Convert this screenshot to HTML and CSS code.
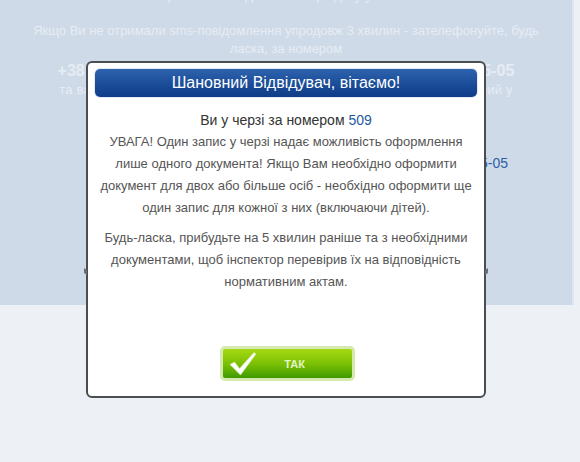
FILE: index.html
```html
<!DOCTYPE html>
<html lang="uk">
<head>
<meta charset="utf-8">
<link rel="stylesheet" href="styles.css">
</head>
<body>
<div class="page">
  <div class="panel">
    <p class="cut">ви отримаєте повідомлення про дату у хвилинах.</p>
    <p class="info">Якщо Ви не отримали sms-повідомлення упродовж 3 хвилин - зателефонуйте, будь<br>ласка, за номером</p>
    <p class="phone">+38 (044) 000-00-00, +38 (050) 000-00-00, +38 (067) 000-05-05</p>
    <p class="note">та ваш запис буде підтверджено в установленому порядку, визначений у</p>
  </div>
  <span class="stray">5-05</span>
  <div class="modal">
    <div class="modal-head">Шановний Відвідувач, вітаємо!</div>
    <div class="modal-body">
      <p class="queue">Ви у черзі за номером <span class="num">509</span></p>
      <p class="txt">УВАГА! Один запис у черзі надає можливість оформлення лише одного документа! Якщо Вам необхідно оформити документ для двох або більше осіб - необхідно оформити ще один запис для кожної з них (включаючи дітей).</p>
      <p class="txt second">Будь-ласка, прибудьте на 5 хвилин раніше та з необхідними документами, щоб інспектор перевірив їх на відповідність нормативним актам.</p>
    </div>
    <div class="modal-foot">
      <button class="ok">
        <svg class="check" width="28" height="25" viewBox="0 0 28 25"><path d="M1 13.5 L5.5 11 L10.5 17.5 L25 1.5 L27 3 L11.5 24 Z" fill="#ffffff" stroke="#cfeaa0" stroke-width="0.6" stroke-linejoin="round"/></svg>
        <span class="ok-label">ТАК</span>
      </button>
    </div>
  </div>
</div>
</body>
</html>
```
FILE: styles.css
```css
html, body {
  margin: 0;
  padding: 0;
}
body {
  background: #edf0f5;
  font-family: "Liberation Sans", Arial, sans-serif;
  width: 580px;
  height: 462px;
  overflow: hidden;
}
.page {
  position: relative;
  width: 580px;
  height: 462px;
}
.panel {
  width: 574px;
  height: 305px;
  box-sizing: border-box;
  background: #cfdae8;
  border-right: 2px solid #dfe5ee;
  text-align: center;
  color: #e6ecf4;
  font-size: 13px;
  overflow: hidden;
}
.panel p {
  margin: 0;
  white-space: nowrap;
}
.cut {
  margin-top: -13px !important;
  line-height: 18px;
}
.info {
  padding: 17px 0 0;
  font-size: 13px;
  line-height: 18px;
}
.phone {
  font-size: 16px;
  font-weight: bold;
  line-height: 22px;
  margin-top: 2px !important;
}
.note {
  font-size: 13px;
  letter-spacing: 0.2px;
  line-height: 16px;
}
.stray {
  position: absolute;
  left: 480px;
  top: 155px;
  font-size: 14px;
  color: #2b5fa6;
}
.modal {
  position: absolute;
  left: 86px;
  top: 61px;
  width: 400px;
  height: 337px;
  box-sizing: border-box;
  border: 2px solid #4a4d52;
  border-radius: 6px;
  background: #ffffff;
  display: flex;
  flex-direction: column;
}
.modal::before,
.modal::after {
  content: "";
  position: absolute;
  top: 206px;
  width: 3px;
  height: 5px;
  background: #6a6d72;
}
.modal::before {
  left: -4px;
  transform: skewY(35deg);
}
.modal::after {
  right: -4px;
  transform: skewY(-35deg);
}
.modal-head {
  margin: 6px 7px 0;
  height: 28px;
  border-radius: 5px;
  background: linear-gradient(#2f63ad, #1a4c98 55%, #0f3d88);
  box-shadow: 0 0 0 1px #e4ebf5;
  color: #ffffff;
  font-size: 16px;
  line-height: 28px;
  text-align: center;
}
.modal-body {
  padding: 12px 12px 0;
  text-align: center;
}
.modal-body p {
  margin: 0;
}
.queue {
  font-size: 14px;
  line-height: 22px;
  color: #333333;
}
.num {
  color: #1d5a9e;
}
.txt {
  font-size: 13px;
  line-height: 22px;
  color: #555555;
}
.second {
  margin-top: 8px !important;
}
.modal-foot {
  margin-top: auto;
  padding-bottom: 15px;
  display: flex;
  justify-content: center;
}
.ok {
  margin-left: 3px;
  width: 135px;
  height: 35px;
  box-sizing: border-box;
  padding: 0;
  border: 3px solid #d6e9ae;
  border-radius: 5px;
  background: linear-gradient(#a6d912, #7cc106 50%, #3f9a00);
  display: flex;
  align-items: center;
}
.check {
  margin-left: 6px;
}
.ok-label {
  flex: 1;
  text-align: center;
  margin-right: 26px;
  margin-left: 6px;
  font-family: "Liberation Sans", Arial, sans-serif;
  font-size: 11px;
  font-weight: bold;
  color: #e4f4c4;
}
```
